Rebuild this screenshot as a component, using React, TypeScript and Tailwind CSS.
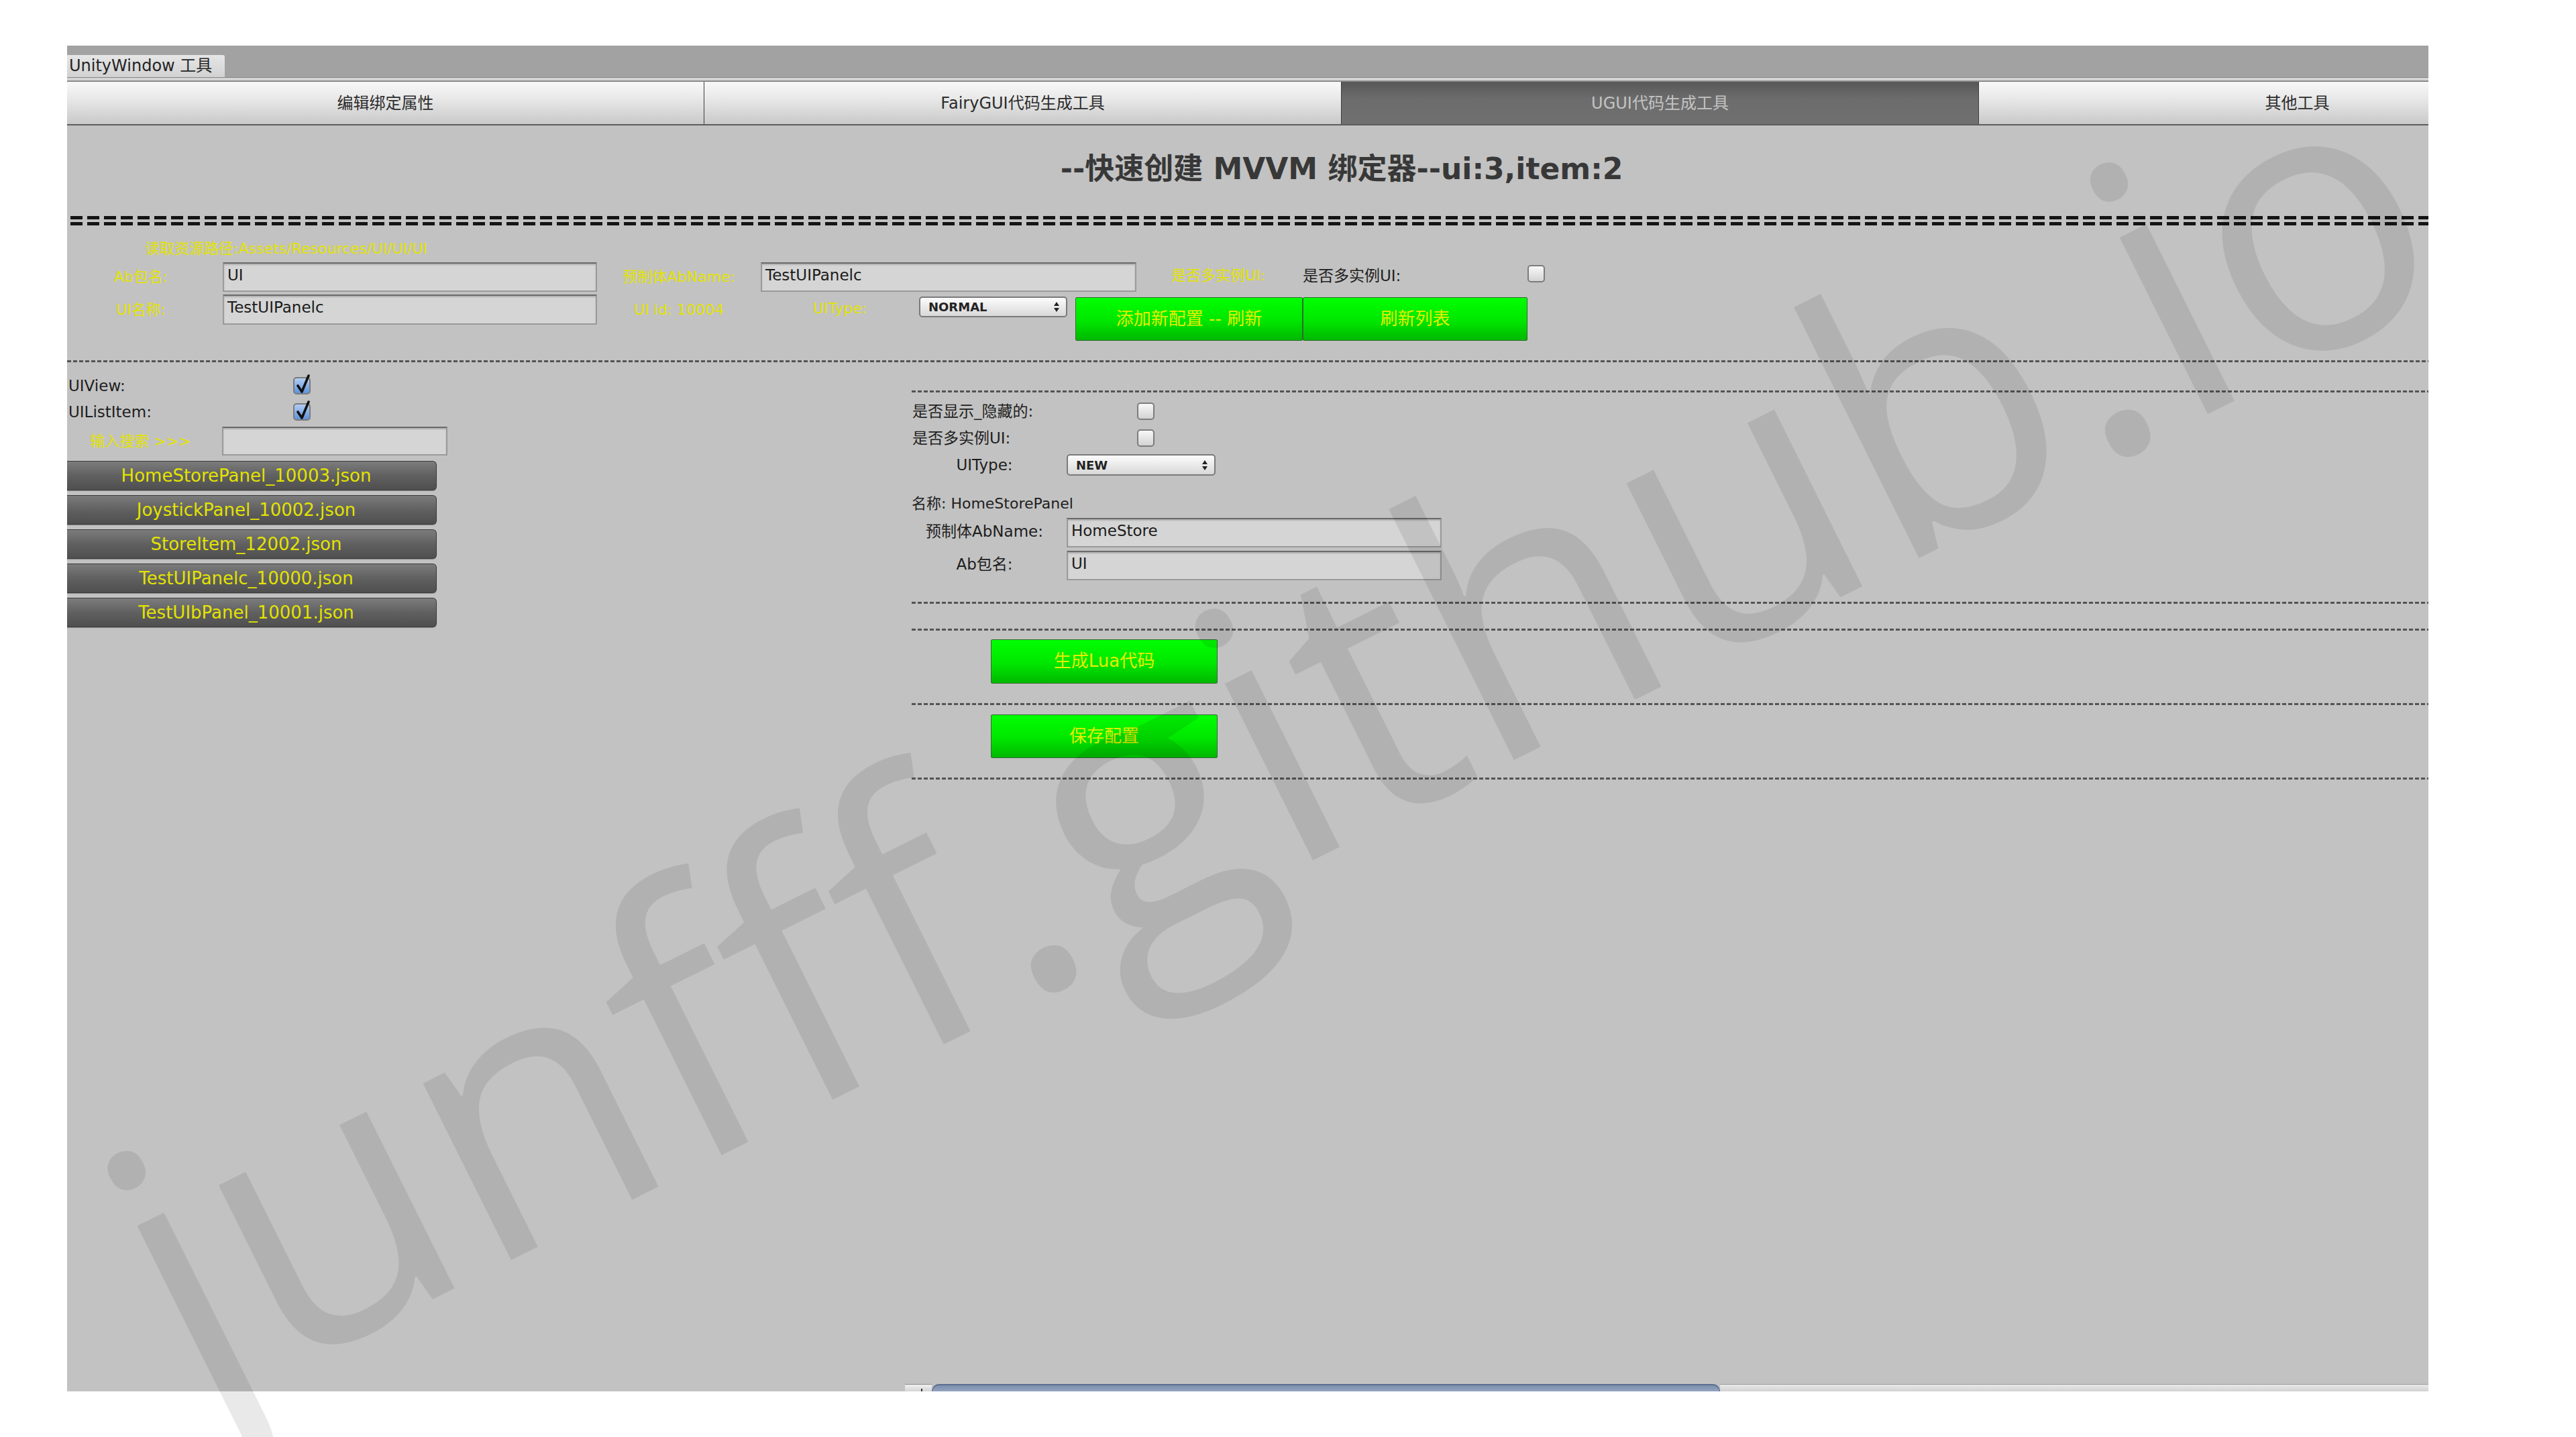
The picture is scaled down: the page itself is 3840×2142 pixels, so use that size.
import React from "react";

const ui = "font-['DejaVu_Sans','Noto_Sans_CJK_SC',sans-serif]";

const files = [
  "HomeStorePanel_10003.json",
  "JoystickPanel_10002.json",
  "StoreItem_12002.json",
  "TestUIPanelc_10000.json",
  "TestUIbPanel_10001.json",
];

const tabs = [
  { label: "编辑绑定属性", active: false },
  { label: "FairyGUI代码生成工具", active: false },
  { label: "UGUI代码生成工具", active: true },
  { label: "其他工具", active: false },
];

function Dashes({ className = "" }: { className?: string }) {
  return (
    <div
      className={`h-[3px] bg-[repeating-linear-gradient(90deg,#545454_0px,#545454_6px,transparent_6px,transparent_9px)] ${className}`}
    />
  );
}

function Toggle({ on = false, className = "" }: { on?: boolean; className?: string }) {
  return (
    <div
      className={`relative h-[26px] w-[26px] shrink-0 rounded-[5px] border-2 border-[#7c7c7c] ${
        on ? "bg-[linear-gradient(#b2cdf2,#5f93dc)]" : "bg-[linear-gradient(#f8f8f8,#d3d3d3)]"
      } ${className}`}
    >
      {on && (
        <svg className="absolute left-[2px] top-[-6px]" width="22" height="30" viewBox="0 0 22 30">
          <path d="M3 17 L9 26 L19 2" fill="none" stroke="#111" strokeWidth="3.6" strokeLinecap="round" strokeLinejoin="round" />
        </svg>
      )}
    </div>
  );
}

function Field({ value = "", className = "" }: { value?: string; className?: string }) {
  return (
    <div
      className={`shrink-0 border-2 border-[#9a9a9a] border-t-[#6a6a6a] bg-[#d5d5d5] px-[5px] pt-[2px] text-[23px] leading-[30px] text-[#1b1b1b] shadow-[inset_0_2px_2px_rgba(0,0,0,0.18)] ${className}`}
    >
      {value}
    </div>
  );
}

function Popup({ value, className = "" }: { value: string; className?: string }) {
  return (
    <div
      className={`flex shrink-0 items-center justify-between rounded-[5px] border-2 border-[#7a7a7a] bg-[linear-gradient(#fcfcfc,#d8d8d8)] pl-[12px] pr-[10px] text-[18px] font-bold text-[#232323] ${className}`}
    >
      <span>{value}</span>
      <svg width="8" height="15" viewBox="0 0 8 15">
        <polygon points="0,6 4,0 8,6" fill="#222" />
        <polygon points="0,9 4,15 8,9" fill="#222" />
      </svg>
    </div>
  );
}

function GreenButton({ label, className = "" }: { label: string; className?: string }) {
  return (
    <div
      className={`flex shrink-0 items-center justify-center rounded-[2px] border border-[#2f6b2f] bg-[linear-gradient(#00ff00,#00e600_55%,#00b800)] text-[26px] text-[#e6ee00] ${className}`}
    >
      {label}
    </div>
  );
}

function Yellow({ children, className = "" }: { children: React.ReactNode; className?: string }) {
  return <div className={`shrink-0 text-[22px] text-[#e3e300] ${className}`}>{children}</div>;
}

export default function App() {
  return (
    <div className={`relative h-[2142px] w-[3840px] overflow-hidden bg-white ${ui}`}>
      <div className="pl-[100px] pt-[68px]">
        {/* unity window, clipped on the right */}
        <div className="h-[2006px] w-[3520px] overflow-hidden bg-[#c2c2c2]">
          <div className="flex h-full w-[3800px] flex-col">
            {/* window title bar */}
            <div className="flex h-[47px] shrink-0 items-end bg-[#a2a2a2]">
              <div className="h-[33px] w-[235px] rounded-tr-[3px] bg-[linear-gradient(#e6e6e6,#d2d2d2)] pl-[3px] text-[24px] leading-[33px] text-[#242424]">
                UnityWindow 工具
              </div>
            </div>
            <div className="h-[7px] shrink-0 border-t border-b-2 border-t-[#868686] border-b-[#8a8a8a] bg-[#d4d4d4]" />

            {/* toolbar tabs */}
            <div className="flex h-[65px] shrink-0 border-b-2 border-[#5c5c5c]">
              {tabs.map((t) => (
                <div
                  key={t.label}
                  className={`flex w-[950px] items-center justify-center border-r border-[#3e3e3e] text-[24px] ${
                    t.active
                      ? "bg-[linear-gradient(#585858,#6c6c6c_40%,#707070)] text-[#c4c4c4]"
                      : "bg-[linear-gradient(#f8f8f8,#e8e8e8_40%,#c9c9c9)] text-[#2c2c2c]"
                  }`}
                >
                  {t.label}
                </div>
              ))}
            </div>

            {/* heading */}
            <div className="mt-[35px] h-[60px] shrink-0 text-center text-[44px] font-bold leading-[60px] text-[#383838]">
              --快速创建 MVVM 绑定器--ui:3,item:2
            </div>

            {/* ===== separator */}
            <div className="ml-[5px] mt-[40px] flex h-[14px] w-[3515px] shrink-0 flex-col justify-between">
              <div className="h-[5px] bg-[repeating-linear-gradient(90deg,#141414_0px,#141414_18px,transparent_18px,transparent_25px)]" />
              <div className="h-[5px] bg-[repeating-linear-gradient(90deg,#141414_0px,#141414_18px,transparent_18px,transparent_25px)]" />
            </div>

            {/* config rows */}
            <Yellow className="ml-[116px] mt-[20px] h-[30px] leading-[30px]">读取资源路径:Assets/Resources/UI/UI/UI</Yellow>

            <div className="mt-[5px] flex h-[44px] shrink-0 items-start">
              <Yellow className="w-[232px] pr-[12px] text-center leading-[44px]">Ab包名:</Yellow>
              <Field value="UI" className="h-[44px] w-[558px]" />
              <Yellow className="w-[244px] text-center leading-[44px]">预制体AbName:</Yellow>
              <Field value="TestUIPanelc" className="h-[44px] w-[560px]" />
              <Yellow className="w-[244px] text-center leading-[40px]">是否多实例UI:</Yellow>
              <div className="w-[339px] pl-[4px] text-[23px] leading-[40px] text-[#1e1e1e]">是否多实例UI:</div>
              <Toggle className="mt-[4px]" />
            </div>

            <div className="mt-[4px] flex shrink-0 items-start">
              <Yellow className="w-[232px] pr-[12px] text-center leading-[45px]">UI名称:</Yellow>
              <Field value="TestUIPanelc" className="h-[45px] w-[558px]" />
              <Yellow className="w-[244px] text-center leading-[45px]">UI id: 10004</Yellow>
              <Yellow className="w-[236px] text-center leading-[42px]">UIType:</Yellow>
              <Popup value="NORMAL" className="mt-[3px] h-[31px] w-[221px]" />
              <div className="ml-[12px] mt-[4px] flex">
                <GreenButton label="添加新配置 -- 刷新" className="h-[65px] w-[339px]" />
                <GreenButton label="刷新列表" className="h-[65px] w-[335px]" />
              </div>
            </div>

            <Dashes className="mt-[29px] w-[3520px] shrink-0" />

            {/* two columns */}
            <div className="flex min-h-0 flex-1">
              <div className="flex w-[1259px] shrink-0 flex-col">
                <div className="mt-[22px] flex h-[26px] items-center">
                  <div className="w-[337px] pl-[2px] text-[23px] text-[#1e1e1e]">UIView:</div>
                  <Toggle on />
                </div>
                <div className="mt-[13px] flex h-[26px] items-center">
                  <div className="w-[337px] pl-[2px] text-[23px] text-[#1e1e1e]">UIListItem:</div>
                  <Toggle on />
                </div>
                <div className="mt-[9px] flex items-center">
                  <Yellow className="w-[231px] pr-[12px] text-center">输入搜索 &gt;&gt;&gt;</Yellow>
                  <Field className="h-[43px] w-[336px]" />
                </div>
                <div className="mt-[8px] flex flex-col gap-[7px]">
                  {files.map((f) => (
                    <div
                      key={f}
                      className="h-[44px] w-[551px] rounded-r-[6px] border border-l-0 border-[#3a3a3a] bg-[linear-gradient(#7c7c7c,#606060_50%,#4f4f4f)] pr-[16px] text-center text-[26px] leading-[42px] text-[#e3e300] shadow-[0_1px_1px_rgba(0,0,0,0.3)]"
                    >
                      {f}
                    </div>
                  ))}
                </div>
              </div>

              <div className="flex w-[2541px] shrink-0 flex-col">
                <Dashes className="mt-[42px]" />
                <div className="mt-[15px] flex h-[26px] items-center">
                  <div className="w-[336px] pl-[1px] text-[23px] text-[#1e1e1e]">是否显示_隐藏的:</div>
                  <Toggle />
                </div>
                <div className="mt-[14px] flex h-[26px] items-center">
                  <div className="w-[336px] pl-[1px] text-[23px] text-[#1e1e1e]">是否多实例UI:</div>
                  <Toggle />
                </div>
                <div className="mt-[10px] flex items-center">
                  <div className="w-[231px] pr-[14px] text-center text-[23px] text-[#1e1e1e]">UIType:</div>
                  <Popup value="NEW" className="h-[32px] w-[222px]" />
                </div>
                <div className="mt-[25px] h-[30px] text-[22px] leading-[30px] text-[#1e1e1e]">名称: HomeStorePanel</div>
                <div className="mt-[6px] flex items-start">
                  <div className="w-[231px] pr-[14px] text-center text-[23px] leading-[40px] text-[#1e1e1e]">预制体AbName:</div>
                  <Field value="HomeStore" className="h-[44px] w-[559px]" />
                </div>
                <div className="mt-[5px] flex items-start">
                  <div className="w-[231px] pr-[14px] text-center text-[23px] leading-[40px] text-[#1e1e1e]">Ab包名:</div>
                  <Field value="UI" className="h-[44px] w-[559px]" />
                </div>
                <Dashes className="mt-[32px]" />
                <Dashes className="mt-[37px]" />
                <GreenButton label="生成Lua代码" className="ml-[118px] mt-[13px] h-[66px] w-[338px]" />
                <Dashes className="mt-[29px]" />
                <GreenButton label="保存配置" className="ml-[118px] mt-[14px] h-[65px] w-[338px]" />
                <Dashes className="mt-[29px]" />
              </div>
            </div>

            {/* horizontal scrollbar of the right pane, cut by the window edge */}
            <div className="flex h-[11px] shrink-0 pl-[1249px]">
              <div className="relative w-[40px] border-t border-[#8c8c8c] bg-[linear-gradient(#f0f0f0,#d4d4d4)]">
                <div className="absolute left-[24px] top-[6px] h-[5px] w-[2px] bg-[#333]" />
              </div>
              <div className="w-[1175px] rounded-tl-[14px] rounded-tr-[14px] border-t-2 border-x border-[#5d6f8f] bg-[linear-gradient(#7d8fae,#93a3bf)]" />
              <div className="flex-1 border-t border-[#9a9a9a] bg-[linear-gradient(#e8e8e8,#d2d2d2)]" />
            </div>
          </div>
        </div>
      </div>

      {/* site watermark over everything */}
      <div className="pointer-events-none absolute left-[76px] top-[1675px] origin-top-left -rotate-[26.5deg] whitespace-nowrap font-['Open_Sans',sans-serif] text-[550px] leading-none text-[rgba(0,0,0,0.085)]">
        junfff.github.io
      </div>
    </div>
  );
}
